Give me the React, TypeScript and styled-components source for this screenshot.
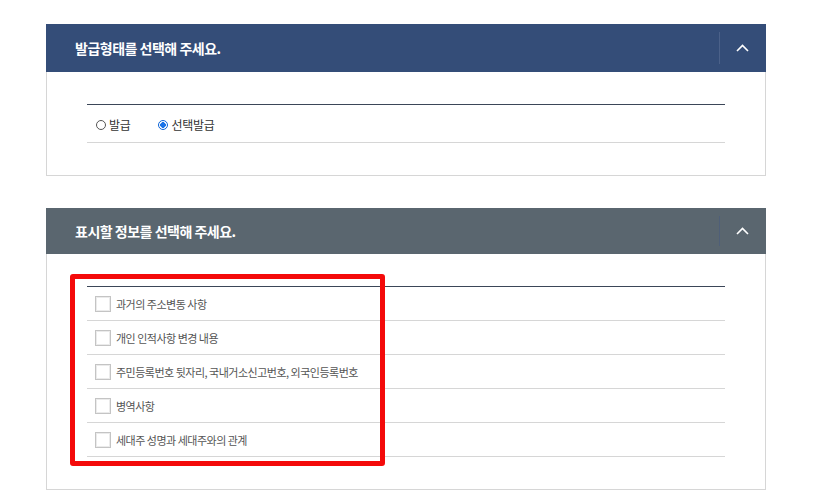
import styled, { createGlobalStyle } from "styled-components";

const GlobalStyle = createGlobalStyle`
  html, body {
    margin: 0;
    padding: 0;
    background: #fff;
  }
  body {
    font-family: "Noto Sans CJK KR", "Noto Sans", sans-serif;
  }
`;

const Page = styled.div`
  width: 720px;
  padding: 24px 0 0 46px;
  display: flex;
  flex-direction: column;
  gap: 32px;
`;

const Panel = styled.section`
  position: relative;
  display: flex;
  flex-direction: column;
`;

const Header = styled.div<{ $bg: string; $h: number }>`
  height: ${p => p.$h}px;
  background: ${p => p.$bg};
  display: flex;
  align-items: center;
  justify-content: space-between;
`;

const Title = styled.h3`
  margin: 0;
  padding-left: 29px;
  font-size: 14px;
  font-weight: 700;
  letter-spacing: -0.5px;
  color: #fff;
`;

const Toggle = styled.button<{ $line: string }>`
  width: 47px;
  height: 100%;
  padding: 0;
  background: none;
  border: none;
  display: flex;
  align-items: center;
  justify-content: center;
  position: relative;
  cursor: pointer;

  &::before {
    content: "";
    position: absolute;
    left: 0;
    top: 8px;
    bottom: 8px;
    width: 1px;
    background: ${p => p.$line};
  }
`;

const Body = styled.div`
  border: 1px solid #d6d6d6;
  border-top: none;
  padding: 32px 40px 32px 40px;
`;

const List = styled.ul`
  margin: 0;
  padding: 0;
  list-style: none;
  border-top: 1px solid #3b4658;
`;

const RadioRow = styled.li`
  height: 38px;
  border-bottom: 1px solid #d6d6d6;
  display: flex;
  align-items: center;
  gap: 28px;
  padding: 2px 0 0 9px;
  box-sizing: border-box;
`;

const RadioLabel = styled.label`
  display: flex;
  align-items: center;
  gap: 3px;
  font-size: 12px;
  letter-spacing: -0.3px;
  color: #333;
`;

const Radio = styled.span<{ $on: boolean }>`
  width: 10px;
  height: 10px;
  box-sizing: border-box;
  border-radius: 50%;
  border: 1px solid ${p => (p.$on ? "#0a63d8" : "#555")};
  background: ${p => (p.$on ? "radial-gradient(circle, #1a73e8 0 2.6px, #fff 3px)" : "#fff")};
`;

const CheckRow = styled.li`
  height: 33px;
  border-bottom: 1px solid #d6d6d6;
  display: flex;
  align-items: center;
  gap: 5px;
  padding-left: 8px;
  font-size: 11px;
  letter-spacing: -0.5px;
  color: #555;
`;

const Box = styled.span`
  width: 16px;
  height: 16px;
  box-sizing: border-box;
  border: 1px solid #c4c4c4;
  box-shadow: inset 0 0 0 1px #ebebeb;
  background: #fff;
  flex-shrink: 0;
`;

const Highlight = styled.div`
  position: absolute;
  left: 24px;
  top: 66px;
  width: 315px;
  height: 192px;
  box-sizing: border-box;
  border: 5px solid #f40a0a;
  border-radius: 3px;
  pointer-events: none;
`;

const Chevron = () => (
  <svg width="13" height="8" viewBox="0 0 13 8">
    <path d="M1 7 L6.5 1.5 L12 7" fill="none" stroke="#fff" strokeWidth="1.6" />
  </svg>
);

const items = [
  "과거의 주소변동 사항",
  "개인 인적사항 변경 내용",
  "주민등록번호 뒷자리, 국내거소신고번호, 외국인등록번호",
  "병역사항",
  "세대주 성명과 세대주와의 관계",
];

export default function App() {
  return (
    <>
      <GlobalStyle />
      <Page>
        <Panel>
          <Header $bg="#344d78" $h={48}>
            <Title>발급형태를 선택해 주세요.</Title>
            <Toggle $line="#4b6189">
              <Chevron />
            </Toggle>
          </Header>
          <Body>
            <List>
              <RadioRow>
                <RadioLabel>
                  <Radio $on={false} />
                  발급
                </RadioLabel>
                <RadioLabel>
                  <Radio $on={true} />
                  선택발급
                </RadioLabel>
              </RadioRow>
            </List>
          </Body>
        </Panel>

        <Panel>
          <Header $bg="#5a666f" $h={46}>
            <Title>표시할 정보를 선택해 주세요.</Title>
            <Toggle $line="#4f5f78">
              <Chevron />
            </Toggle>
          </Header>
          <Body>
            <List>
              {items.map(t => (
                <CheckRow key={t}>
                  <Box />
                  {t}
                </CheckRow>
              ))}
            </List>
          </Body>
          <Highlight />
        </Panel>
      </Page>
    </>
  );
}
